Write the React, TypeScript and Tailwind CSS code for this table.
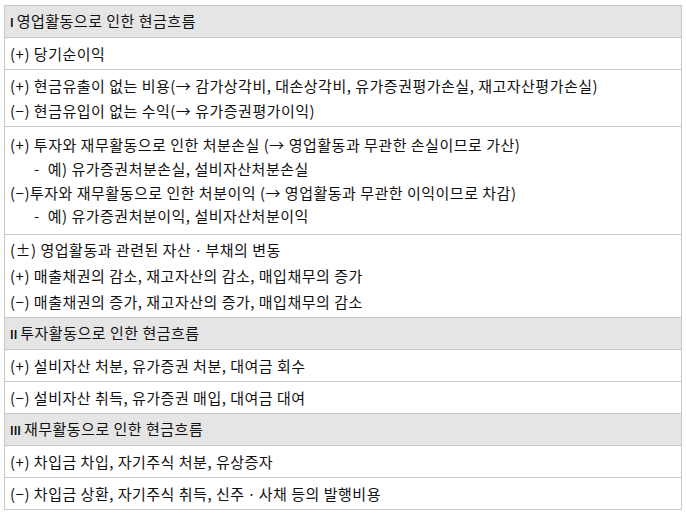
const font = '"Noto Sans CJK KR", "Liberation Sans", sans-serif';

type Row =
  | { kind: 'head'; num: string; text: string }
  | { kind: 'body'; leading: string; lines: { text: string; indent?: boolean }[] };

const rows: Row[] = [
  { kind: 'head', num: 'I', text: '영업활동으로 인한 현금흐름' },
  { kind: 'body', leading: 'leading-[25px]', lines: [{ text: '(+) 당기순이익' }] },
  {
    kind: 'body',
    leading: 'leading-[25px]',
    lines: [
      { text: '(+) 현금유출이 없는 비용(→ 감가상각비, 대손상각비, 유가증권평가손실, 재고자산평가손실)' },
      { text: '(−) 현금유입이 없는 수익(→ 유가증권평가이익)' },
    ],
  },
  {
    kind: 'body',
    leading: 'leading-[23.7px]',
    lines: [
      { text: '(+) 투자와 재무활동으로 인한 처분손실 (→ 영업활동과 무관한 손실이므로 가산)' },
      { text: '예) 유가증권처분손실, 설비자산처분손실', indent: true },
      { text: '(−)투자와 재무활동으로 인한 처분이익 (→ 영업활동과 무관한 이익이므로 차감)' },
      { text: '예) 유가증권처분이익, 설비자산처분이익', indent: true },
    ],
  },
  {
    kind: 'body',
    leading: 'leading-[25.7px]',
    lines: [
      { text: '(±) 영업활동과 관련된 자산ㆍ부채의 변동' },
      { text: '(+) 매출채권의 감소, 재고자산의 감소, 매입채무의 증가' },
      { text: '(−) 매출채권의 증가, 재고자산의 증가, 매입채무의 감소' },
    ],
  },
  { kind: 'head', num: 'II', text: '투자활동으로 인한 현금흐름' },
  { kind: 'body', leading: 'leading-[25px]', lines: [{ text: '(+) 설비자산 처분, 유가증권 처분, 대여금 회수' }] },
  { kind: 'body', leading: 'leading-[25px]', lines: [{ text: '(−) 설비자산 취득, 유가증권 매입, 대여금 대여' }] },
  { kind: 'head', num: 'III', text: '재무활동으로 인한 현금흐름' },
  { kind: 'body', leading: 'leading-[25px]', lines: [{ text: '(+) 차입금 차입, 자기주식 처분, 유상증자' }] },
  { kind: 'body', leading: 'leading-[25px]', lines: [{ text: '(−) 차입금 상환, 자기주식 취득, 신주ㆍ사채 등의 발행비용' }] },
];

const heights = ['h-[32px]', 'h-[32px]', 'h-[57px]', 'h-[108px]', 'h-[83px]', 'h-[32px]', 'h-[32px]', 'h-[32px]', 'h-[32px]', 'h-[32px]', 'h-[32px]'];

export default function App() {
  return (
    <div
      className="min-h-[516px] w-[686px] bg-white pl-[4px] pt-[5px] text-[15px] tracking-[0.5px] text-[#111]"
      style={{ fontFamily: font }}
    >
      <table className="w-[678px] border-collapse">
        <tbody>
          {rows.map((row, i) => (
            <tr key={i} className={heights[i]}>
              {row.kind === 'head' ? (
                <td className="border border-[#c8c8c8] bg-[#e5e5e5] px-[5px] py-0 align-middle leading-[25px]">
                  <span className="mr-[3px] text-[11px] font-bold tracking-[0px]">{row.num}</span>
                  {row.text}
                </td>
              ) : (
                <td className={`border border-[#c8c8c8] px-[5px] py-0 align-middle ${row.leading}`}>
                  {row.lines.map((l, j) => (
                    <div key={j} className={l.indent ? 'pl-[24px]' : ''}>
                      {l.indent ? <span className="mr-[8px]">-</span> : null}
                      {l.text}
                    </div>
                  ))}
                </td>
              )}
            </tr>
          ))}
        </tbody>
      </table>
    </div>
  );
}
